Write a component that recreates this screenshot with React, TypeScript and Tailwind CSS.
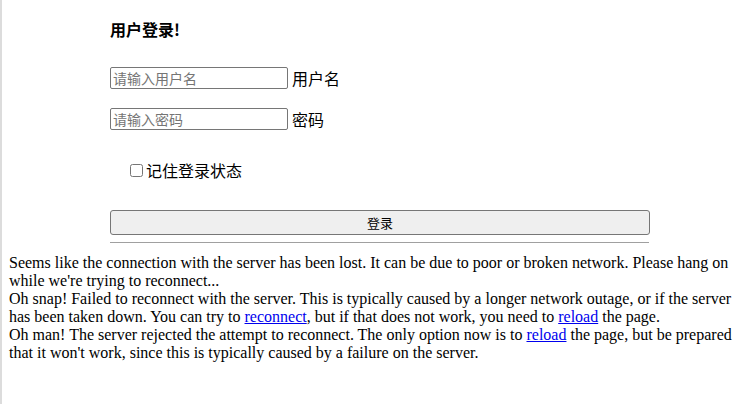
import React from "react";

export default function App() {
  const cjk = { fontFamily: '"Noto Sans CJK SC", "Noto Sans", sans-serif' };
  return (
    <div className="flex min-h-[404px] w-full bg-white text-black">
      <div className="w-[2px] shrink-0 bg-[#dcdcdc]" />
      <div className="flex-1 pl-[7px] pr-[10px]">
        <form
          className="ml-[101px] w-[540px] pt-[17px]"
          style={cjk}
          onSubmit={(e) => e.preventDefault()}
        >
          <h3 className="text-[16px] font-bold leading-[24px]">用户登录!</h3>
          <div className="mt-[26px] flex items-center gap-[4px]">
            <input
              className="h-[22px] w-[178px] rounded-[2px] border border-[#767676] px-[2px] text-[14px] leading-[20px] placeholder:text-[#757575]"
              placeholder="请输入用户名"
            />
            <span className="text-[16px] leading-[20px]">用户名</span>
          </div>
          <div className="mt-[19px] flex items-center gap-[4px]">
            <input
              type="password"
              className="h-[22px] w-[178px] rounded-[2px] border border-[#767676] px-[2px] text-[14px] leading-[20px] placeholder:text-[#757575]"
              placeholder="请输入密码"
            />
            <span className="text-[16px] leading-[20px]">密码</span>
          </div>
          <label className="mt-[28px] ml-[20px] flex h-[24px] items-center gap-[3px]">
            <input type="checkbox" className="m-0 h-[13px] w-[13px]" />
            <span className="text-[16px] leading-[24px]">记住登录状态</span>
          </label>
          <button
            type="submit"
            className="mt-[28px] flex h-[25px] w-[540px] items-center justify-center rounded-[3px] border border-[#767676] bg-[#efefef] text-[13px] leading-[16px]"
          >
            登录
          </button>
          <div className="mt-[7px] h-px w-[539px] bg-[#a0a0a0]" />
        </form>
        <div
          className="mt-[11px] text-[16px] leading-[18px]"
          style={{ fontFamily: '"Liberation Serif", "Times New Roman", serif' }}
        >
          <div>
            Seems like the connection with the server has been lost. It can be due to poor or broken network. Please hang on while we're trying to reconnect...
          </div>
          <div>
            Oh snap! Failed to reconnect with the server. This is typically caused by a longer network outage, or if the server has been taken down. You can try to{" "}
            <a href="#" className="text-[#0000ee] underline">reconnect</a>, but if that does not work, you need to{" "}
            <a href="#" className="text-[#0000ee] underline">reload</a> the page.
          </div>
          <div>
            Oh man! The server rejected the attempt to reconnect. The only option now is to{" "}
            <a href="#" className="text-[#0000ee] underline">reload</a> the page, but be prepared that it won't work, since this is typically caused by a failure on the server.
          </div>
        </div>
      </div>
    </div>
  );
}
